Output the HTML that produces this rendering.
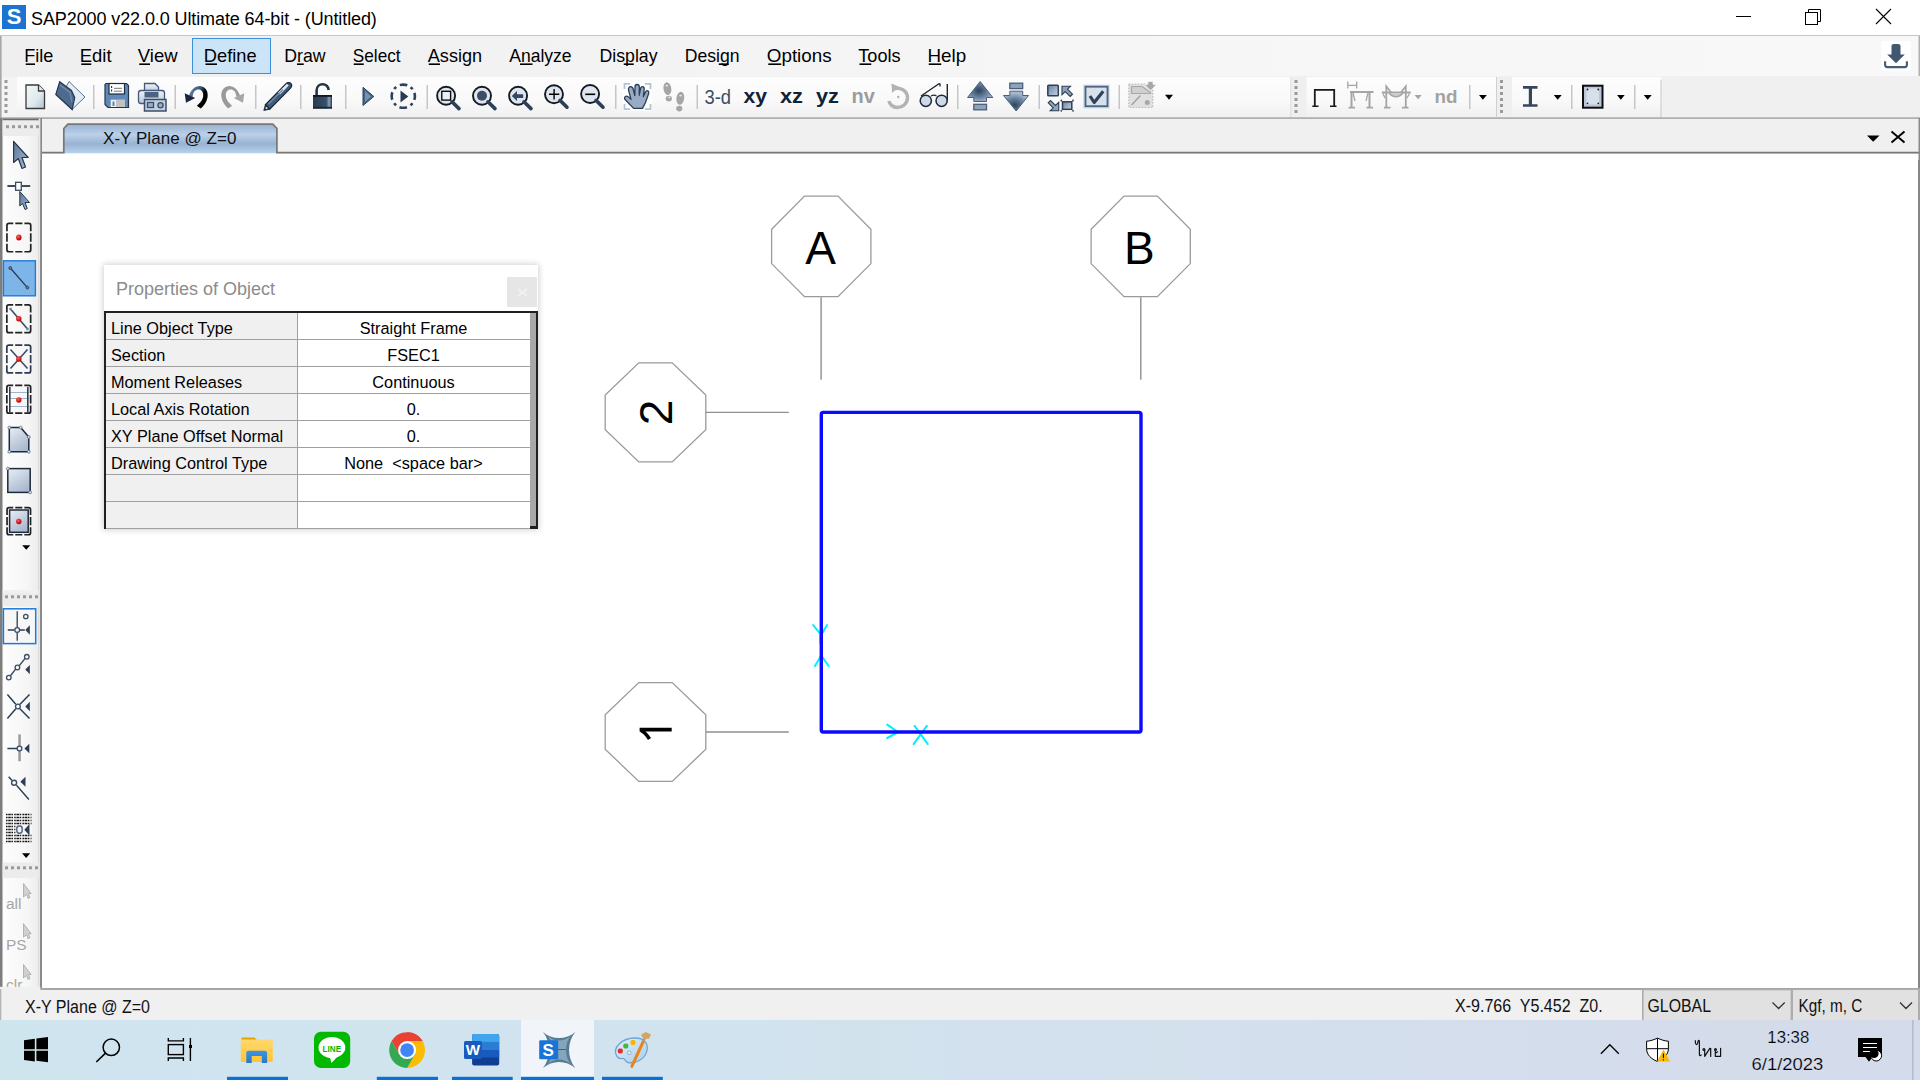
<!DOCTYPE html>
<html><head><meta charset="utf-8">
<style>
*{margin:0;padding:0;box-sizing:border-box}
html,body{width:1920px;height:1080px;overflow:hidden;background:#f0f0f0;font-family:"Liberation Sans",sans-serif;color:#000}
.a{position:absolute}
#title{left:0;top:0;width:1920px;height:36px;background:#fff}
#menubar{left:0;top:35px;width:1920px;height:41px;background:linear-gradient(90deg,#efefef,#f2f2f2 25%,#f6f6f6 55%,#f8f8f8);border-top:1px solid #c6c6c6}
#toolbar{left:2px;top:77px;width:1659px;height:40px;background:linear-gradient(#fdfdfd,#f9f9f9 60%,#f0f0f0)}
.sep{position:absolute;top:85px;width:1px;height:24px;background:#c4c4c4}
#tabstrip{left:41px;top:117px;width:1879px;height:37px;background:#f0f0f0}
#canvas{left:42px;top:154px;width:1877px;height:834px;background:#fff}
#leftbar{left:0;top:117px;width:41px;height:872px;background:#f0f0f0}
#status{left:0;top:988px;width:1920px;height:32px;background:#f0f0f0}
#taskbar{left:0;top:1020px;width:1920px;height:60px;background:linear-gradient(90deg,#cfe5ee,#d1e3ee 40%,#d4deec 75%,#d4dbea)}
</style></head><body>
<div class="a" id="title"></div>
<div class="a" id="menubar"></div>
<div class="a" id="toolbar"></div>
<div class="a" id="leftbar"></div>
<div class="a" id="tabstrip"></div>
<div class="a" id="canvas"></div>
<div class="a" id="status"></div>
<div class="a" id="taskbar"></div>

<!-- TITLE -->
<div class="a" style="left:2px;top:5px;width:24px;height:24px;background:#1e72d0;color:#fff;font-weight:bold;font-size:22px;line-height:24px;text-align:center">S</div>
<div class="a" style="left:31px;top:9px;font-size:18px;letter-spacing:-0.1px;white-space:nowrap;color:#000">SAP2000 v22.0.0 Ultimate 64-bit - (Untitled)</div>
<svg class="a" style="left:1720px;top:0" width="200" height="36">
<line x1="16" y1="16.5" x2="31" y2="16.5" stroke="#000" stroke-width="1"/>
<rect x="85.5" y="12.5" width="12" height="12" fill="none" stroke="#000" stroke-width="1"/>
<path d="M88.5 12.5V9.5H100.5V21.5H97.5" fill="none" stroke="#000" stroke-width="1"/>
<path d="M156 9L171 24M171 9L156 24" stroke="#000" stroke-width="1.1"/>
</svg>
<!-- MENU -->
<div class="a" style="left:192px;top:38px;width:79px;height:36px;background:#cce4f7;border:1px solid #3c8fd8"></div>
<svg class="a" id="menusvg" style="left:0;top:36px" width="1000" height="40" viewBox="0 36 1000 40"><g font-family="Liberation Sans" font-size="19" fill="#000">
<text x="24.3" y="61.8" textLength="29.1" lengthAdjust="spacingAndGlyphs">File</text>
<text x="79.8" y="61.8" textLength="31.8" lengthAdjust="spacingAndGlyphs">Edit</text>
<text x="137.8" y="61.8" textLength="39.8" lengthAdjust="spacingAndGlyphs">View</text>
<text x="203.8" y="61.8" textLength="52.8" lengthAdjust="spacingAndGlyphs">Define</text>
<text x="284.3" y="61.8" textLength="41.3" lengthAdjust="spacingAndGlyphs">Draw</text>
<text x="352.8" y="61.8" textLength="47.8" lengthAdjust="spacingAndGlyphs">Select</text>
<text x="427.8" y="61.8" textLength="54.3" lengthAdjust="spacingAndGlyphs">Assign</text>
<text x="509.3" y="61.8" textLength="62.3" lengthAdjust="spacingAndGlyphs">Analyze</text>
<text x="599.5" y="61.8" textLength="58.0" lengthAdjust="spacingAndGlyphs">Display</text>
<text x="684.8" y="61.8" textLength="54.8" lengthAdjust="spacingAndGlyphs">Design</text>
<text x="766.8" y="61.8" textLength="64.8" lengthAdjust="spacingAndGlyphs">Options</text>
<text x="858.3" y="61.8" textLength="42.3" lengthAdjust="spacingAndGlyphs">Tools</text>
<text x="927.5" y="61.8" textLength="38.7" lengthAdjust="spacingAndGlyphs">Help</text>
</g><g fill="#000"><rect x="25.75" y="63.4" width="9.25" height="1.6"/><rect x="81.25" y="63.4" width="10.00" height="1.6"/><rect x="139.25" y="63.4" width="10.75" height="1.6"/><rect x="205.5" y="63.4" width="11.50" height="1.6"/><rect x="297" y="63.4" width="6.75" height="1.6"/><rect x="353.75" y="63.4" width="10.00" height="1.6"/><rect x="428.75" y="63.4" width="11.25" height="1.6"/><rect x="520" y="63.4" width="12.50" height="1.6"/><rect x="623.75" y="63.4" width="10.00" height="1.6"/><rect x="718.75" y="63.4" width="10.00" height="1.6"/><rect x="768.25" y="63.4" width="13.00" height="1.6"/><rect x="859.5" y="63.4" width="11.75" height="1.6"/><rect x="928.75" y="63.4" width="12.50" height="1.6"/></g></svg>
<!-- TOOLBAR -->
<svg class="a" style="left:0;top:76px" width="1920" height="42" viewBox="0 76 1920 42">
<defs>
<linearGradient id="gDoc" x1="0" y1="0" x2="1" y2="1"><stop offset="0" stop-color="#f4f8f9"/><stop offset="0.6" stop-color="#dde9ec"/><stop offset="1" stop-color="#a9c6ce"/></linearGradient>
<linearGradient id="gBlue" x1="0" y1="0" x2="1" y2="1"><stop offset="0" stop-color="#3f5878"/><stop offset="0.5" stop-color="#6d8aac"/><stop offset="1" stop-color="#2e4360"/></linearGradient>
<linearGradient id="gLight" x1="0" y1="0" x2="0" y2="1"><stop offset="0" stop-color="#f2f5f9"/><stop offset="1" stop-color="#b7c6d8"/></linearGradient>
<linearGradient id="gSq" x1="0" y1="0" x2="1" y2="1"><stop offset="0" stop-color="#6480a4"/><stop offset="1" stop-color="#c9d6e4"/></linearGradient>
<radialGradient id="gArrUp" cx="0.45" cy="0.45" r="0.6"><stop offset="0" stop-color="#2d425c"/><stop offset="0.6" stop-color="#6c85a3"/><stop offset="1" stop-color="#a7b8cc"/></radialGradient>
<radialGradient id="gArrDn" cx="0.45" cy="0.7" r="0.6"><stop offset="0" stop-color="#2d425c"/><stop offset="0.6" stop-color="#6c85a3"/><stop offset="1" stop-color="#a7b8cc"/></radialGradient>
<linearGradient id="gLock" x1="0" y1="0" x2="1" y2="0"><stop offset="0" stop-color="#2a3b52"/><stop offset="0.7" stop-color="#3a4f6a"/><stop offset="0.85" stop-color="#8aa0bb"/><stop offset="1" stop-color="#2a3b52"/></linearGradient>
</defs>
<!-- grip -->
<rect x="2" y="77" width="15" height="40" fill="#f4f4f4"/>
<g fill="#9a9a9a"><rect x="4.5" y="80" width="3" height="3"/><rect x="4.5" y="86" width="3" height="3"/><rect x="4.5" y="92" width="3" height="3"/><rect x="4.5" y="98" width="3" height="3"/><rect x="4.5" y="104" width="3" height="3"/><rect x="4.5" y="110" width="3" height="3"/></g>
<!-- new doc -->
<path d="M26 85H38.5L44.5 91V108.5H26Z" fill="url(#gDoc)" stroke="#3a3a3a" stroke-width="1.3"/>
<path d="M38.5 85V91H44.5" fill="#e8eef0" stroke="#3a3a3a" stroke-width="1.3"/>
<!-- open folder -->
<path d="M69 81.5L85 97L72 109.5L60 98Z" fill="#e6ecf4" stroke="#5b7496" stroke-width="1"/>
<path d="M59.7 81.8L71.4 90.5L74.7 97.5L72.2 109.5L55.8 94.5Z" fill="#4e6a8e" stroke="#243650" stroke-width="1.2"/>
<path d="M60 85L70 92.5L72 102" fill="none" stroke="#6e8bb0" stroke-width="1.5"/>
<!-- separators -->
<g fill="#c6c6c6"><rect x="93" y="85" width="1.5" height="24"/><rect x="174.5" y="85" width="1.5" height="24"/><rect x="255" y="85" width="1.5" height="24"/><rect x="300" y="85" width="1.5" height="24"/><rect x="345" y="85" width="1.5" height="24"/><rect x="426.5" y="85" width="1.5" height="24"/><rect x="615" y="85" width="1.5" height="24"/><rect x="696.5" y="85" width="1.5" height="24"/><rect x="957" y="85" width="1.5" height="24"/><rect x="1038.5" y="85" width="1.5" height="24"/><rect x="1118.5" y="85" width="1.5" height="24"/><rect x="1469" y="85" width="1.5" height="24"/><rect x="1571" y="85" width="1.5" height="24"/><rect x="1634" y="85" width="1.5" height="24"/></g>
<!-- save -->
<path d="M106 83.5H126.5L128.5 85.5V107.5H108L105 104.5V84.5Z" fill="#5f89b8" stroke="#24354b" stroke-width="1.2"/>
<rect x="109" y="83.5" width="15.5" height="10.5" fill="#fff" stroke="#1e2a38" stroke-width="1.2"/>
<g stroke="#777" stroke-width="1"><line x1="114" y1="88.3" x2="122" y2="88.3"/><line x1="114" y1="91.2" x2="122" y2="91.2"/></g>
<g fill="#333"><rect x="111" y="86" width="1.2" height="2"/><rect x="111" y="89.5" width="1.2" height="2"/></g>
<rect x="110.5" y="99.5" width="14.5" height="7.5" fill="#c2c2c2"/>
<rect x="111" y="100" width="5" height="7" fill="#eef2f6"/>
<rect x="112.5" y="101.5" width="2" height="4.5" fill="#5a86b6"/>
<!-- print -->
<path d="M144.5 83.5H155L158.5 87V92H144.5Z" fill="url(#gLight)" stroke="#44597a" stroke-width="1.3"/>
<rect x="138.5" y="90.5" width="26" height="13" rx="2.5" fill="url(#gLight)" stroke="#44597a" stroke-width="1.3"/>
<rect x="144.5" y="92" width="14" height="5.5" fill="#4d6383"/>
<rect x="144.5" y="99.5" width="21.5" height="11.5" fill="#c3cfdf" stroke="#3b4f6c" stroke-width="1.5"/>
<rect x="147.5" y="102.5" width="6" height="5" fill="#9aaec6" stroke="#3b4f6c" stroke-width="1.3"/>
<circle cx="160.5" cy="105.2" r="2.6" fill="#9aaec6" stroke="#3b4f6c" stroke-width="1.3"/>
<!-- undo -->
<defs><linearGradient id="gUndo" x1="0" y1="0" x2="1" y2="0.6"><stop offset="0" stop-color="#6a8db5"/><stop offset="0.5" stop-color="#3b5675"/><stop offset="0.75" stop-color="#000"/></linearGradient></defs>
<path d="M189 96C190.5 90 195 86 200 86C206 86.5 208.5 92 207.5 97.5C206.5 102.5 204 105.5 200.8 108.5L196.8 105.8C200 103 203 99.5 203.2 96C203.5 91.5 200.8 89.6 198.3 89.6C195.5 89.6 193 92 192.5 97Z" fill="url(#gUndo)"/>
<path d="M184.7 93.3L186 102.8L195.2 97.9Z" fill="#15263a"/>
<!-- redo (gray) -->
<path d="M240 96C238.5 90 234 86 229 86C223 86.5 220.5 92 221.5 97.5C222.5 102.5 225 105.5 228.2 108.5L232.2 105.8C229 103 226 99.5 225.8 96C225.5 91.5 228.2 89.6 230.7 89.6C233.5 89.6 236 92 236.5 97Z" fill="#9a9a9a"/>
<path d="M244.3 93.3L243 102.8L233.8 97.9Z" fill="#a6a6a6"/>
<!-- pencil -->
<path d="M265.4 104.6L285.8 83.8C287.5 82.2 290 82.3 291 83.5C292 84.8 291.8 86.8 290.3 88.3L269.8 109.2Z" fill="#42597a" stroke="#17222f" stroke-width="1.1"/>
<path d="M279 93.5L287.8 84.7" stroke="#e2e9f1" stroke-width="2.6"/>
<path d="M268.5 104L283 89.5" stroke="#6f8bad" stroke-width="1.3"/>
<path d="M265.4 104.6L263.8 110.5L269.8 109.2Z" fill="#2a3a50" stroke="#17222f" stroke-width="0.8"/>
<circle cx="266.5" cy="108" r="1" fill="#dfe7ef"/>
<!-- lock -->
<path d="M316.6 95.5V90.5C316.6 82.5 328.5 82.2 328.6 90" fill="none" stroke="#24354a" stroke-width="2.6"/>
<rect x="313" y="95" width="19" height="13.6" fill="url(#gLock)"/>
<rect x="313" y="95" width="19" height="1.8" fill="#0e1620"/>
<rect x="313" y="106.8" width="19" height="1.8" fill="#1b2635"/>
<!-- play -->
<path d="M363 87.3V105.5L373.8 96.5Z" fill="#4a6588" stroke="#2c3f58" stroke-width="1"/>
<path d="M365 91V102L371 96.5Z" fill="#7690b0"/>
<!-- dashed circle play -->
<circle cx="403.3" cy="96.2" r="11.6" fill="none" stroke="#2f425b" stroke-width="2.6" stroke-dasharray="7.6 3.8 2.8 3.99" stroke-dashoffset="3.8"/>
<path d="M400.5 90.5V102.5L408.3 96.5Z" fill="#2a3b52"/>
<!-- zoom window -->
<circle cx="446.1" cy="95.7" r="9" fill="#dfe5ee" stroke="#141a22" stroke-width="1.9"/>
<rect x="441.8" y="91.3" width="8.8" height="8.8" fill="#eceff4" stroke="#101010" stroke-width="1.4"/>
<path d="M452 101.8L459 108.6" stroke="#2c3f58" stroke-width="3.6" stroke-linecap="round"/>
<!-- zoom full -->
<circle cx="482" cy="95.7" r="9" fill="#dfe5ee" stroke="#141a22" stroke-width="1.9"/>
<circle cx="482" cy="95.7" r="5" fill="#3a4e69"/>
<path d="M488 101.8L495 108.6" stroke="#2c3f58" stroke-width="3.6" stroke-linecap="round"/>
<!-- zoom prev -->
<circle cx="518.1" cy="95.7" r="9" fill="#dfe5ee" stroke="#141a22" stroke-width="1.9"/>
<path d="M511.8 96L517 91V94.2H523.2V98H517V101Z" fill="#34475f"/>
<path d="M524 101.8L531 108.6" stroke="#2c3f58" stroke-width="3.6" stroke-linecap="round"/>
<!-- zoom in -->
<circle cx="554" cy="94.3" r="9" fill="#dfe5ee" stroke="#141a22" stroke-width="1.9"/>
<path d="M549 94.3H559.3M554.1 89V99.5" stroke="#000" stroke-width="1.4"/>
<path d="M560 100.4L567 107.2" stroke="#2c3f58" stroke-width="3.6" stroke-linecap="round"/>
<!-- zoom out -->
<circle cx="590.1" cy="94" r="9" fill="#dfe5ee" stroke="#141a22" stroke-width="1.9"/>
<path d="M585.2 94.3H595.2" stroke="#000" stroke-width="1.6"/>
<path d="M596 100.4L603 107.2" stroke="#2c3f58" stroke-width="3.6" stroke-linecap="round"/>
<!-- pan hand -->
<rect x="623" y="82" width="29" height="29" fill="#fff"/>
<g fill="none" stroke="#b3c3d6" stroke-width="1.8"><path d="M624.5 89V83.8H630"/><path d="M645 83.8H650.5V89"/><path d="M624.5 104V109.2H630"/><path d="M645 109.2H650.5V104"/></g>
<path d="M633.6 108.4L625.3 99.8C623.8 98.3 624.6 96 626.8 96.2C628.3 96.4 629.8 98 631 99.3L628.6 90.3C628 88 629.3 86.6 630.8 86.7C632.2 86.8 633 88 633.4 89.8L634.8 95.6L635 87C635 85.2 636 84.5 637.1 84.5C638.4 84.5 639.3 85.4 639.3 87.2V95.2L640.5 88.6C640.8 87 641.8 86.4 642.8 86.6C644 86.9 644.4 88 644.2 89.5L643.3 96.5L645.5 92C646.2 90.7 647.4 90.4 648.2 91C649 91.6 649 92.7 648.5 94L645.5 102.5L642.5 108.4Z" fill="#98abc4" stroke="#2c3e56" stroke-width="1.3" stroke-linejoin="round"/>
<!-- footprints gray -->
<g fill="#a6a6a6"><ellipse cx="667.4" cy="88.6" rx="3.9" ry="6.5" transform="rotate(-8 667.4 88.6)"/><ellipse cx="668.8" cy="98.6" rx="3.1" ry="2.9"/><ellipse cx="680.3" cy="98.2" rx="3.9" ry="6.6" transform="rotate(8 680.3 98.2)"/><ellipse cx="679.3" cy="108.6" rx="3.1" ry="2.8"/></g>
<g fill="#ececec"><ellipse cx="666.8" cy="85.6" rx="1.3" ry="0.9"/><ellipse cx="669.2" cy="97.4" rx="1" ry="0.8"/><ellipse cx="680.6" cy="95.6" rx="1.3" ry="0.9"/></g>
<!-- 3-d xy xz yz nv -->
<text x="704.5" y="104" font-family="Liberation Sans" font-size="19.5" fill="#3a4e66" textLength="26.5" lengthAdjust="spacingAndGlyphs">3-d</text>
<g font-family="Liberation Sans" font-weight="bold" font-size="21" fill="#0f2236">
<text x="743.5" y="103" textLength="23.5" lengthAdjust="spacingAndGlyphs">xy</text>
<text x="780" y="103" textLength="23" lengthAdjust="spacingAndGlyphs">xz</text>
<text x="816" y="103" textLength="23" lengthAdjust="spacingAndGlyphs">yz</text>
<text x="851.5" y="103" textLength="23.2" lengthAdjust="spacingAndGlyphs" fill="#9c9c9c">nv</text>
</g>
<!-- rotate gray -->
<path d="M893 89.5C900 86 907.5 91 907.5 97.5C907.5 104 902 107.5 897.5 107.5C892.5 107.5 889.5 104 889 101" fill="none" stroke="#b3b3b3" stroke-width="3.4"/>
<path d="M891.5 83.5L898.5 86.5L892 93Z" fill="#b3b3b3"/>
<circle cx="898.3" cy="97" r="1.2" fill="#b3b3b3"/>
<!-- glasses -->
<path d="M921 96L939 83.7L940 84V86.5" fill="none" stroke="#1c2430" stroke-width="1.3"/>
<path d="M947.3 84V101" stroke="#1c2430" stroke-width="1.4"/>
<circle cx="925.8" cy="100.8" r="5.6" fill="#cfd9e6" stroke="#1c2a3c" stroke-width="1.5"/>
<circle cx="941.6" cy="100.8" r="5.6" fill="#cfd9e6" stroke="#1c2a3c" stroke-width="1.5"/>
<path d="M931 96C933 95 935 95 936.5 96" fill="none" stroke="#1c2a3c" stroke-width="1.3"/>
<!-- up arrow -->
<path d="M980.2 81.5L967.5 97.5H973.8V101.5H986.5V97.5H992.8Z" fill="url(#gArrUp)" stroke="#4a5f7a" stroke-width="1"/>
<rect x="973.8" y="104.3" width="12.7" height="5.5" fill="#8fa3bc" stroke="#4a5f7a" stroke-width="1.3"/>
<!-- down arrow -->
<rect x="1009.8" y="83.2" width="12.9" height="5.4" fill="#8fa3bc" stroke="#4a5f7a" stroke-width="1.3"/>
<path d="M1009.8 91.2H1022.7V95.5H1028.5L1016.2 111L1003.5 95.5H1009.8Z" fill="url(#gArrDn)" stroke="#4a5f7a" stroke-width="1"/>
<!-- shrink expand -->
<rect x="1047.8" y="85.3" width="10.5" height="10.5" rx="0.8" fill="url(#gSq)" stroke="#2f3f55" stroke-width="1.5"/>
<rect x="1062.5" y="101.8" width="9.3" height="7.5" fill="url(#gSq)" stroke="#2f3f55" stroke-width="1.5"/>
<g fill="#2f3f55"><circle cx="1061.3" cy="100.5" r="0.9"/><circle cx="1073" cy="100.5" r="0.9"/><circle cx="1061.3" cy="110.8" r="0.9"/><circle cx="1073" cy="110.8" r="0.9"/></g>
<path d="M1062 86.2H1070.5L1067.5 89.2L1072.5 94.2L1070.2 96.5L1065.2 91.5L1062 94.6Z" fill="#8ea3bd" stroke="#2f3f55" stroke-width="1.1"/>
<path d="M1058.7 110.8H1050.2L1053.2 107.8L1048.2 102.8L1050.5 100.5L1055.5 105.5L1058.7 102.4Z" fill="#8ea3bd" stroke="#2f3f55" stroke-width="1.1"/>
<!-- checkbox -->
<rect x="1083.3" y="84.7" width="26.3" height="23.7" fill="#c9d8ea"/>
<rect x="1085.5" y="86.7" width="22" height="19.5" fill="#d8e0ea" stroke="#4d6382" stroke-width="1.8"/>
<path d="M1090 96L1094.2 102.5L1103.2 91.3" fill="none" stroke="#2e425c" stroke-width="3.2" stroke-linejoin="round"/>
<!-- gray import icon -->
<rect x="1128.8" y="84" width="24" height="23.5" fill="#e0e0e0" stroke="#bcbcbc" stroke-width="1.2" stroke-dasharray="1.6 1.4"/>
<path d="M1131.5 86.5H1142L1150.5 92.5V93.5H1131.5Z" fill="#d0d0d0" stroke="#a8a8a8" stroke-width="1.2"/>
<path d="M1131.5 105L1140.5 95.5" stroke="#a4a4a4" stroke-width="1.6"/>
<circle cx="1147.3" cy="102.5" r="2.5" fill="#a7a7a7"/>
<path d="M1148 81.5H1153V84.5H1156.5L1150.5 90.5L1144.5 84.5H1148Z" fill="#a8a8a8" stroke="#fff" stroke-width="0.6"/>
<!-- dropdowns -->
<g fill="#000"><path d="M1165 94.8H1173L1169 99.8Z"/><path d="M1479 94.9H1486.8L1482.9 99.8Z"/><path d="M1553.8 94.9H1561.7L1557.7 99.8Z"/><path d="M1617 94.9H1624.7L1620.8 99.8Z"/><path d="M1643.8 94.9H1651.7L1647.7 99.8Z"/></g>
<!-- toolbar 2 edge/grip -->
<rect x="1290.5" y="77" width="1" height="40" fill="#cfcfcf"/>
<rect x="1291.5" y="77" width="15" height="40" fill="#efefef"/>
<g fill="#9a9a9a"><rect x="1294.5" y="80" width="3" height="3"/><rect x="1294.5" y="86" width="3" height="3"/><rect x="1294.5" y="92" width="3" height="3"/><rect x="1294.5" y="98" width="3" height="3"/><rect x="1294.5" y="104" width="3" height="3"/><rect x="1294.5" y="110" width="3" height="3"/></g>
<!-- frame icon -->
<path d="M1314.8 106V89.9H1334.2V106" fill="none" stroke="#1a1a1a" stroke-width="1.8"/>
<path d="M1312.3 106.3H1318.5M1330 106.3H1336.5" stroke="#1a1a1a" stroke-width="1.6"/>
<!-- gray frame 2 -->
<g stroke="#a5a5a5" fill="none"><path d="M1347.8 81.5V88.5M1356.7 81.5V88.5M1347.8 85.3H1356.7" stroke-width="1.3"/>
<path d="M1351.5 107V92M1350 92H1373.5M1369.5 92V107" stroke-width="2"/>
<path d="M1353 93L1355 101M1368 93L1366 101" stroke-width="1.3"/>
<path d="M1348.5 107.6H1355M1366.5 107.6H1373" stroke-width="1.8"/></g>
<!-- gray frame 3 -->
<g stroke="#a5a5a5" fill="none"><path d="M1386.3 107V86.3L1391.5 93M1405.8 107V86.3L1400.5 93" stroke-width="1.8"/>
<path d="M1381.8 92.5H1410.8" stroke-width="2"/>
<path d="M1389 93C1393 98 1399 98 1403 93" stroke-width="1.5" fill="#cdcdcd"/>
<path d="M1383 93.5L1385 98M1409.5 93.5L1407 98" stroke-width="1.3"/>
<path d="M1384 107.6H1390.5M1402 107.6H1408.5" stroke-width="1.8"/></g>
<path d="M1414.5 95H1421.7L1418.1 99.3Z" fill="#a5a5a5"/>
<text x="1434.5" y="103" font-family="Liberation Sans" font-weight="bold" font-size="19" fill="#a2a2a2" textLength="23" lengthAdjust="spacingAndGlyphs">nd</text>
<!-- toolbar 3 edge/grip -->
<rect x="1496" y="77" width="1" height="40" fill="#cfcfcf"/>
<rect x="1497" y="77" width="15" height="40" fill="#efefef"/>
<g fill="#9a9a9a"><rect x="1500" y="80" width="3" height="3"/><rect x="1500" y="86" width="3" height="3"/><rect x="1500" y="92" width="3" height="3"/><rect x="1500" y="98" width="3" height="3"/><rect x="1500" y="104" width="3" height="3"/><rect x="1500" y="110" width="3" height="3"/></g>
<!-- I beam -->
<path d="M1523 86H1537.5V88.8H1532V104.2H1537.5V106.8H1523V104.2H1528.8V88.8H1523Z" fill="#36475b"/>
<!-- rect icon -->
<rect x="1583" y="85.7" width="19.5" height="22" fill="#b9c7d9" stroke="#0e0e0e" stroke-width="2"/>
<rect x="1586.5" y="88.5" width="12.5" height="16" fill="#d7dfe9"/>
<g fill="#222"><circle cx="1587.5" cy="89.5" r="0.9"/><circle cx="1598.3" cy="89.5" r="0.9"/><circle cx="1587.5" cy="103.3" r="0.9"/><circle cx="1598.3" cy="103.3" r="0.9"/></g>
<!-- toolbar 3 right edge -->
<rect x="1660.5" y="80" width="1" height="37" fill="#c8c8c8"/>
</svg>
<!-- download icon -->
<svg class="a" style="left:1876px;top:36px" width="44" height="40">
<rect x="5.3" y="5.2" width="29.4" height="29.6" fill="#fff"/>
<path d="M15.5 10.2C15.5 8.8 16.5 8 17.8 8H22.2C23.5 8 24.5 8.8 24.5 10.2V18.5H28.8L20 27.2L11.2 18.5H15.5Z" fill="#435670"/>
<path d="M9.1 25.3V28.8C9.1 30.4 10 31.1 11.5 31.1H28.6C30.1 31.1 30.9 30.4 30.9 28.8V25.3" fill="none" stroke="#4a5c75" stroke-width="2.1"/>
<rect x="42.5" y="0" width="1.5" height="40" fill="#b0b0b0"/>
</svg>

<!-- TABSTRIP + frame lines -->
<svg class="a" style="left:0;top:112px" width="1920" height="50" viewBox="0 112 1920 50">
<defs><linearGradient id="gTab" x1="0" y1="0" x2="0" y2="1">
<stop offset="0" stop-color="#97b2d2"/><stop offset="0.36" stop-color="#bbd0ea"/><stop offset="0.68" stop-color="#98b3d3"/><stop offset="1" stop-color="#b5d1ec"/></linearGradient></defs>
<rect x="0" y="117.3" width="1920" height="1.6" fill="#a9a9a9"/>
<path d="M63.5 153V128.5L67.5 124.3H272.7L276.8 128.5V153Z" fill="url(#gTab)"/>
<path d="M41 152.7H63.8V128.5L67.8 124.2H272.7L276.9 128.4V152.7H1919" fill="none" stroke="#777" stroke-width="1.7"/>
<rect x="40.3" y="118" width="1.7" height="44" fill="#8a8a8a"/>
<rect x="1918.5" y="118" width="1.5" height="44" fill="#8a8a8a"/>
<path d="M1867 135.5H1879.5L1873.2 141.8Z" fill="#000"/>
<path d="M1891.5 131.5L1904.5 142.5M1904.5 131.5L1891.5 142.5" stroke="#000" stroke-width="1.9"/>
</svg>
<div class="a" style="left:103px;top:129px;font-size:17px;letter-spacing:0.05px;color:#111;white-space:nowrap">X-Y Plane @ Z=0</div>
<!-- canvas borders -->
<div class="a" style="left:40.3px;top:160px;width:1.7px;height:830px;background:#8a8a8a"></div>
<div class="a" style="left:1918.3px;top:160px;width:1.7px;height:860px;background:#868686"></div>
<div class="a" style="left:40px;top:987.8px;width:1880px;height:2.4px;background:#a6a6a6"></div>

<!-- LEFT TOOLBAR -->
<svg class="a" style="left:0;top:36px" width="42" height="954" viewBox="0 36 42 954">
<defs>
<linearGradient id="gLb" x1="0" y1="0" x2="1" y2="0"><stop offset="0" stop-color="#fdfdfd"/><stop offset="0.7" stop-color="#f6f6f6"/><stop offset="1" stop-color="#ececec"/></linearGradient>
<linearGradient id="gPtr" x1="0" y1="0" x2="1" y2="1"><stop offset="0" stop-color="#5a7598"/><stop offset="1" stop-color="#a9bbd1"/></linearGradient>
<linearGradient id="gFace" x1="0" y1="0" x2="0.6" y2="1"><stop offset="0" stop-color="#e9eef5"/><stop offset="1" stop-color="#a9b9cf"/></linearGradient>
<radialGradient id="gRed" cx="0.4" cy="0.35" r="0.6"><stop offset="0" stop-color="#ff6060"/><stop offset="1" stop-color="#c00000"/></radialGradient>
</defs>
<rect x="0" y="36" width="1.6" height="82" fill="#a8a8a8"/>
<rect x="0" y="118" width="2.7" height="869" fill="#7e7e7e"/>
<rect x="2.7" y="118" width="36" height="869" fill="url(#gLb)"/>
<rect x="38.3" y="120" width="1" height="867" fill="#d4d4d4"/>
<rect x="2.7" y="118.3" width="36" height="2" fill="#6c6c6c"/>
<rect x="2.7" y="121" width="36" height="15" fill="#ececec"/>
<g fill="#9a9a9a"><rect x="6" y="125.2" width="3" height="3"/><rect x="12" y="125.2" width="3" height="3"/><rect x="18" y="125.2" width="3" height="3"/><rect x="24" y="125.2" width="3" height="3"/><rect x="30" y="125.2" width="3" height="3"/><rect x="36" y="125.2" width="3" height="3"/></g>
<!-- 1 pointer -->
<path d="M13.6 141.3V162.5L18.3 158.5L22 168.5L25.5 167L22 157.5H28.2Z" fill="url(#gPtr)" stroke="#24364c" stroke-width="1.2" stroke-linejoin="round"/>
<!-- 2 joint pointer -->
<path d="M7.4 186.1H15.4M21.5 186.1H30.2" stroke="#3b4b60" stroke-width="2"/>
<rect x="15.6" y="182.3" width="5.7" height="8" fill="#fff" stroke="#3b4b60" stroke-width="1.3"/>
<path d="M19.8 191.5V206L22.5 203.5L25 209.5L27.3 208.5L25 202.5H29.5Z" fill="url(#gPtr)" stroke="#24364c" stroke-width="1" stroke-linejoin="round"/>
<!-- 3 dashed box dot -->
<path d="M6.94 231.35V225.45Q6.94 223.45 8.95 223.45H13.28M24.42 223.45H28.75Q30.75 223.45 30.75 225.45V231.35M30.75 243.84V249.75Q30.75 251.75 28.75 251.75H24.42M13.28 251.75H8.95Q6.94 251.75 6.94 249.75V243.84M15.28 223.45H22.41M15.28 251.75H22.41M6.94 233.35V241.84M30.75 233.35V241.84" fill="none" stroke="#222" stroke-width="1.7"/>
<ellipse cx="18.85" cy="237.4" rx="2.7" ry="3" fill="url(#gRed)"/>
<!-- 4 selected line -->
<rect x="3.4" y="260.8" width="32" height="35" fill="#7eb5e8" stroke="#1f7ad8" stroke-width="1.4"/>
<path d="M10.3 268L27.4 287.6" stroke="#2c3a4c" stroke-width="1.3"/>
<circle cx="10.3" cy="268" r="1.5" fill="#5e7492" stroke="#2c3a4c" stroke-width="0.7"/><circle cx="27.4" cy="287.6" r="1.5" fill="#5e7492" stroke="#2c3a4c" stroke-width="0.7"/>
<!-- 5 dashed line w dot -->
<path d="M6.85 312.58V306.85Q6.85 304.85 8.85 304.85H13.17M24.32 304.85H28.65Q30.65 304.85 30.65 306.85V312.58M30.65 324.92V330.65Q30.65 332.65 28.65 332.65H24.32M13.17 332.65H8.85Q6.85 332.65 6.85 330.65V324.92M15.17 304.85H22.31M15.17 332.65H22.31M6.85 314.58V322.91M30.65 314.58V322.91" fill="none" stroke="#222" stroke-width="1.7"/>
<path d="M10.5 309L27.5 329" stroke="#3b4d66" stroke-width="1.6"/>
<rect x="9.3" y="307.8" width="2.4" height="2.4" fill="#7089aa"/><rect x="26.3" y="327.8" width="2.4" height="2.4" fill="#7089aa"/>
<circle cx="18.8" cy="318.7" r="2.7" fill="url(#gRed)"/>
<!-- 6 X -->
<path d="M6.85 352.88V347.15Q6.85 345.15 8.85 345.15H13.17M24.32 345.15H28.65Q30.65 345.15 30.65 347.15V352.88M30.65 365.22V370.95Q30.65 372.95 28.65 372.95H24.32M13.17 372.95H8.85Q6.85 372.95 6.85 370.95V365.22M15.17 345.15H22.31M15.17 372.95H22.31M6.85 354.88V363.21M30.65 354.88V363.21" fill="none" stroke="#2e3c50" stroke-width="1.7"/>
<path d="M10.5 349.5L27.5 368.5M27.5 349.5L10.5 368.5" stroke="#3b4d66" stroke-width="1.6"/>
<circle cx="18.8" cy="359" r="2.7" fill="url(#gRed)"/>
<!-- 7 -->
<path d="M6.85 393.08V387.35Q6.85 385.35 8.85 385.35H13.17M24.32 385.35H28.65Q30.65 385.35 30.65 387.35V393.08M30.65 405.42V411.15Q30.65 413.15 28.65 413.15H24.32M13.17 413.15H8.85Q6.85 413.15 6.85 411.15V405.42M15.17 385.35H22.31M15.17 413.15H22.31M6.85 395.08V403.41M30.65 395.08V403.41" fill="none" stroke="#222" stroke-width="1.7"/>
<path d="M9 392.5H29M9 398.5H29M9 406.5H29" stroke="#9fb4cc" stroke-width="1.2"/>
<path d="M9.8 387V412.5M27.8 387V412.5" stroke="#2e3c50" stroke-width="1.6"/>
<circle cx="18.8" cy="400" r="2.7" fill="url(#gRed)"/>
<!-- 8 polygon -->
<path d="M9.3 427.6H20.7L28.8 437V451.8H9.3Z" fill="url(#gFace)" stroke="#1e2a3a" stroke-width="1.5"/>
<g fill="#dde6f0" stroke="#56708f" stroke-width="0.8"><circle cx="9.3" cy="427.6" r="1.4"/><circle cx="20.7" cy="427.6" r="1.4"/><circle cx="28.8" cy="437" r="1.4"/><circle cx="9.3" cy="451.8" r="1.4"/><circle cx="28.8" cy="451.8" r="1.4"/></g>
<!-- 9 square -->
<rect x="7.8" y="468.6" width="22.4" height="23.8" fill="url(#gFace)" stroke="#1e2a3a" stroke-width="1.5"/>
<g fill="#dde6f0" stroke="#56708f" stroke-width="0.8"><circle cx="7.8" cy="468.6" r="1.4"/><circle cx="30.2" cy="492.4" r="1.4"/></g>
<!-- 10 dashed w face -->
<path d="M7.05 515.07V509.55Q7.05 507.55 9.05 507.55H13.27M24.32 507.55H28.54Q30.54 507.55 30.54 509.55V515.07M30.54 527.23V532.75Q30.54 534.75 28.54 534.75H24.32M13.27 534.75H9.05Q7.05 534.75 7.05 532.75V527.23M15.27 507.55H22.32M15.27 534.75H22.32M7.05 517.07V525.23M30.54 517.07V525.23" fill="none" stroke="#222" stroke-width="1.7"/>
<rect x="9.6" y="510" width="18.6" height="22.3" fill="url(#gFace)" stroke="#1e2a3a" stroke-width="1.5"/>
<circle cx="18.8" cy="521.5" r="2.7" fill="url(#gRed)"/>
<path d="M22.2 545.3H30.3L26.25 549.8Z" fill="#000"/>
<!-- group 2 grip -->
<rect x="2.7" y="590" width="36" height="3" fill="#f0f0f0"/>
<rect x="2.7" y="593" width="36" height="13.5" fill="#ececec"/>
<g fill="#9a9a9a"><rect x="5" y="595.3" width="3" height="3"/><rect x="11" y="595.3" width="3" height="3"/><rect x="17" y="595.3" width="3" height="3"/><rect x="23" y="595.3" width="3" height="3"/><rect x="29" y="595.3" width="3" height="3"/><rect x="35" y="595.3" width="3" height="3"/></g>
<!-- s1 -->
<rect x="3.4" y="608.8" width="32.3" height="34.8" fill="#f7f7f7" stroke="#1f7ad8" stroke-width="1.5"/>
<path d="M17.2 611.2V627.5M17.2 632.5V640.7M7.8 630H14.7M19.7 630H24.8" stroke="#2c3e56" stroke-width="1.3"/>
<circle cx="17.2" cy="630" r="2.4" fill="none" stroke="#3a4e68" stroke-width="1.3"/>
<circle cx="25.8" cy="616.5" r="2.2" fill="none" stroke="#3a4e68" stroke-width="1.3"/>
<path d="M29.8 625.3V634.7L25.3 630Z" fill="#2c3e56"/>
<!-- s2 -->
<path d="M10.3 676L15.7 669M19 666L25 658.5" stroke="#3a4e68" stroke-width="1.3"/>
<g fill="none" stroke="#3a4e68" stroke-width="1.3"><circle cx="8.8" cy="677.6" r="2.3"/><circle cx="17.4" cy="667.5" r="2.3"/><circle cx="26.8" cy="656.8" r="2.3"/></g>
<path d="M29.8 664.9V674.3L25.3 669.6Z" fill="#2c3e56"/>
<!-- s3 -->
<path d="M7.4 694.4L15.8 704.3M19.9 708.8L29.5 718.6M29.5 694.4L20 704.3M15.8 708.8L7.4 718.6" stroke="#2c3e56" stroke-width="1.5"/>
<circle cx="17.9" cy="706.5" r="2.4" fill="none" stroke="#3a4e68" stroke-width="1.3"/>
<path d="M29.8 701.8V711.2L25.3 706.5Z" fill="#2c3e56"/>
<!-- s4 -->
<rect x="18.3" y="734.4" width="2.5" height="26.8" fill="#9a9a9a"/>
<path d="M7.4 748.5H17" stroke="#2c3e56" stroke-width="1.5"/>
<circle cx="19.5" cy="748.5" r="2.4" fill="#f4f4f4" stroke="#3a4e68" stroke-width="1.3"/>
<path d="M29.3 743.8V753.2L24.4 748.5Z" fill="#2c3e56"/>
<!-- s5 -->
<path d="M8.7 776.7L11.8 780.3M16.5 785.3L28.9 799.5" stroke="#2c3e56" stroke-width="1.4"/>
<circle cx="14.1" cy="782.7" r="2.5" fill="none" stroke="#3a4e68" stroke-width="1.4"/>
<path d="M25.5 776.7V786.7L20.3 781.7Z" fill="#2c3e56"/>
<!-- s6 grid -->
<g stroke="#1a1a1a" stroke-width="1.4" stroke-dasharray="1.6 0.6 2.6 0.6 1.6 1.2"><path d="M6 814.5H31.5M6 817.5H31.5M6 820.5H31.5M6 823.5H31.5M6 826.5H31.5M6 829.5H31.5M6 832.5H31.5M6 835.5H31.5M6 838.5H31.5M6 841.5H31.5"/></g>
<rect x="15.5" y="825" width="16.5" height="9" fill="#f7f7f7"/>
<rect x="16.8" y="826" width="5.4" height="7.2" rx="2.4" fill="#f4f4f4" stroke="#4a6284" stroke-width="1.4"/>
<path d="M29.5 824V835.5L24.3 829.7Z" fill="#2c3e56"/>
<path d="M22.1 853.2H30.2L26.15 857.9Z" fill="#000"/>
<!-- group 3 grip -->
<rect x="2.7" y="862.6" width="36" height="15.4" fill="#ececec"/>
<g fill="#9a9a9a"><rect x="5" y="866.3" width="3" height="3"/><rect x="11" y="866.3" width="3" height="3"/><rect x="17" y="866.3" width="3" height="3"/><rect x="23" y="866.3" width="3" height="3"/><rect x="29" y="866.3" width="3" height="3"/><rect x="35" y="866.3" width="3" height="3"/></g>
<g fill="#a6a6a6" font-family="Liberation Sans" font-size="15.5">
<text x="6" y="909.3">all</text><text x="6" y="949.5">PS</text><text x="6" y="989.5">clr</text></g>
<g fill="#d0d0d0" stroke="#a8a8a8" stroke-width="0.8"><path d="M23.5 883.5V897L26.5 894.5L28 898.5L30 897.5L28.5 893.5H31.2Z"/><path d="M23.5 923.7V937.2L26.5 934.7L28 938.7L30 937.7L28.5 933.7H31.2Z"/><path d="M23.5 964.5V978L26.5 975.5L28 979.5L30 978.5L28.5 974.5H31.2Z"/></g>
<rect x="0" y="986.8" width="40.3" height="3.2" fill="#f0f0f0"/>
</svg>

<!-- CANVAS DRAWING -->
<svg class="a" style="left:0;top:0" width="1920" height="990" viewBox="0 0 1920 990">
<g fill="#fff" stroke="#9a9a9a" stroke-width="1.3">
<path d="M804.5 196.1L838.0 196.1L870.9 229.2L870.9 263.6L838.0 296.7L804.5 296.7L771.6 263.6L771.6 229.2Z"/>
<path d="M1124.0 196.1L1157.4 196.1L1190.3 229.2L1190.3 263.6L1157.4 296.7L1124.0 296.7L1091.1 263.6L1091.1 229.2Z"/>
<path d="M638.8 362.8L672.2 362.8L705.8 395.1L705.8 429.6L672.2 461.9L638.8 461.9L605.2 429.6L605.2 395.1Z"/>
<path d="M638.8 682.6L672.2 682.6L705.8 714.8L705.8 749.2L672.2 781.4L638.8 781.4L605.2 749.2L605.2 714.8Z"/>
</g>
<g stroke="#8f8f8f" stroke-width="1.4">
<path d="M821.1 297.2V379.8"/>
<path d="M1140.8 297.2V379.8"/>
<path d="M706 412.4H788.8"/>
<path d="M706 732H788.8"/>
</g>
<g font-family="Liberation Sans" font-size="46" fill="#000">
<text x="820.5" y="264.4" text-anchor="middle">A</text>
<text x="1139.4" y="264.4" text-anchor="middle">B</text>
<text transform="translate(672,412.4) rotate(-90)" text-anchor="middle">2</text>

</g>
<path d="M639.6 729.6H671.7M641 730.5C644 732 647 735 649.5 739" stroke="#000" stroke-width="3.6" fill="none"/>
<g stroke="#00f0ff" stroke-width="2" fill="none" stroke-linecap="round">
<path d="M813.1 625.1L821.3 634.8M827.1 625.1L821.3 634.8"/>
<path d="M814.9 666L821.3 655.5M828.6 666L821.3 655.5"/>
<path d="M887.2 724.6L898 732.1M887.2 738L898 732.1"/>
<path d="M914.6 725.8L927.8 744.1M926.8 725.8L913.6 744.1"/>
</g>
<path d="M820.6 635V643.5" stroke="#1a7dff" stroke-width="2"/>
<rect x="821.3" y="412.4" width="319.7" height="319.6" rx="2" fill="none" stroke="#0a0aff" stroke-width="3.4"/>
</svg>

<!-- PROPERTIES DIALOG -->
<div class="a" style="left:104px;top:265px;width:434px;height:264px;background:#fff;box-shadow:0 0 6px 1px rgba(0,0,0,0.18)"></div>
<div class="a" style="left:116px;top:279px;font-size:18px;color:#8c8c8c;white-space:nowrap">Properties of Object</div>
<div class="a" style="left:507px;top:277px;width:30px;height:30px;background:#e6e6e6"></div>
<svg class="a" style="left:507px;top:277px" width="30" height="30"><path d="M11.3 12.3L19.7 18.7M19.7 12.3L11.3 18.7" stroke="#f1f1f1" stroke-width="1.9"/></svg>
<div class="a" style="left:104px;top:311px;width:434px;height:218px;background:#202020"></div>
<div class="a" style="left:106px;top:313px;width:191px;height:27px;background:#f0f0f0;border-bottom:1px solid #a0a0a0"></div>
<div class="a" style="left:297px;top:313px;width:233px;height:27px;background:#fff;border-bottom:1px solid #a0a0a0;border-left:1px solid #a0a0a0"></div>
<div class="a" style="left:111px;top:319px;font-size:16.3px;white-space:pre;color:#000">Line Object Type</div>
<div class="a" style="left:297px;top:319px;width:233px;text-align:center;font-size:16.3px;white-space:pre;color:#000">Straight Frame</div>
<div class="a" style="left:106px;top:340px;width:191px;height:27px;background:#f0f0f0;border-bottom:1px solid #a0a0a0"></div>
<div class="a" style="left:297px;top:340px;width:233px;height:27px;background:#fff;border-bottom:1px solid #a0a0a0;border-left:1px solid #a0a0a0"></div>
<div class="a" style="left:111px;top:346px;font-size:16.3px;white-space:pre;color:#000">Section</div>
<div class="a" style="left:297px;top:346px;width:233px;text-align:center;font-size:16.3px;white-space:pre;color:#000">FSEC1</div>
<div class="a" style="left:106px;top:367px;width:191px;height:27px;background:#f0f0f0;border-bottom:1px solid #a0a0a0"></div>
<div class="a" style="left:297px;top:367px;width:233px;height:27px;background:#fff;border-bottom:1px solid #a0a0a0;border-left:1px solid #a0a0a0"></div>
<div class="a" style="left:111px;top:373px;font-size:16.3px;white-space:pre;color:#000">Moment Releases</div>
<div class="a" style="left:297px;top:373px;width:233px;text-align:center;font-size:16.3px;white-space:pre;color:#000">Continuous</div>
<div class="a" style="left:106px;top:394px;width:191px;height:27px;background:#f0f0f0;border-bottom:1px solid #a0a0a0"></div>
<div class="a" style="left:297px;top:394px;width:233px;height:27px;background:#fff;border-bottom:1px solid #a0a0a0;border-left:1px solid #a0a0a0"></div>
<div class="a" style="left:111px;top:400px;font-size:16.3px;white-space:pre;color:#000">Local Axis Rotation</div>
<div class="a" style="left:297px;top:400px;width:233px;text-align:center;font-size:16.3px;white-space:pre;color:#000">0.</div>
<div class="a" style="left:106px;top:421px;width:191px;height:27px;background:#f0f0f0;border-bottom:1px solid #a0a0a0"></div>
<div class="a" style="left:297px;top:421px;width:233px;height:27px;background:#fff;border-bottom:1px solid #a0a0a0;border-left:1px solid #a0a0a0"></div>
<div class="a" style="left:111px;top:427px;font-size:16.3px;white-space:pre;color:#000">XY Plane Offset Normal</div>
<div class="a" style="left:297px;top:427px;width:233px;text-align:center;font-size:16.3px;white-space:pre;color:#000">0.</div>
<div class="a" style="left:106px;top:448px;width:191px;height:27px;background:#f0f0f0;border-bottom:1px solid #a0a0a0"></div>
<div class="a" style="left:297px;top:448px;width:233px;height:27px;background:#fff;border-bottom:1px solid #a0a0a0;border-left:1px solid #a0a0a0"></div>
<div class="a" style="left:111px;top:454px;font-size:16.3px;white-space:pre;color:#000">Drawing Control Type</div>
<div class="a" style="left:297px;top:454px;width:233px;text-align:center;font-size:16.3px;white-space:pre;color:#000">None  &lt;space bar&gt;</div>
<div class="a" style="left:106px;top:475px;width:191px;height:27px;background:#f0f0f0;border-bottom:1px solid #a0a0a0"></div>
<div class="a" style="left:297px;top:475px;width:233px;height:27px;background:#fff;border-bottom:1px solid #a0a0a0;border-left:1px solid #a0a0a0"></div>
<div class="a" style="left:106px;top:502px;width:191px;height:27px;background:#f0f0f0;border-bottom:1px solid #a0a0a0"></div>
<div class="a" style="left:297px;top:502px;width:233px;height:27px;background:#fff;border-bottom:1px solid #a0a0a0;border-left:1px solid #a0a0a0"></div>

<div class="a" style="left:530.3px;top:313px;width:5.6px;height:213px;background:#a8a8a8"></div>

<!-- STATUS BAR -->
<svg class="a" style="left:0;top:988px" width="1920" height="32" viewBox="0 988 1920 32">
<rect x="0" y="989" width="1.3" height="31" fill="#b4b4b4"/>
<g font-family="Liberation Sans" font-size="17.5" fill="#111">
<text x="25" y="1013.1" textLength="125" lengthAdjust="spacingAndGlyphs">X-Y Plane @ Z=0</text>
<text x="1455" y="1011.9" textLength="147.7" lengthAdjust="spacingAndGlyphs" xml:space="preserve">X-9.766  Y5.452  Z0.</text>
</g>
<rect x="1642" y="989" width="150" height="31" fill="#e1e1e1"/>
<rect x="1642" y="989" width="1.6" height="31" fill="#adadad"/>
<rect x="1642" y="989" width="278" height="1.3" fill="#adadad"/>
<rect x="1790.6" y="989" width="2.4" height="31" fill="#adadad"/>
<rect x="1793" y="990.3" width="125" height="29.7" fill="#e1e1e1"/>
<rect x="1918" y="989" width="2" height="31" fill="#adadad"/>
<g font-family="Liberation Sans" font-size="17.5" fill="#111">
<text x="1647.5" y="1011.7" textLength="63.5" lengthAdjust="spacingAndGlyphs">GLOBAL</text>
<text x="1798.5" y="1011.7" textLength="63.7" lengthAdjust="spacingAndGlyphs">Kgf, m, C</text>
</g>
<path d="M1772.5 1002.5L1778.6 1008.5L1784.7 1002.5M1900 1002.5L1906 1008.5L1912 1002.5" fill="none" stroke="#333" stroke-width="1.3"/>
</svg>
<!-- TASKBAR -->
<svg class="a" style="left:0;top:1020px" width="1920" height="60" viewBox="0 1020 1920 60">
<defs>
<linearGradient id="gFold" x1="0" y1="0" x2="0" y2="1"><stop offset="0" stop-color="#ffd86e"/><stop offset="1" stop-color="#ffc531"/></linearGradient>
<linearGradient id="gShelf" x1="0" y1="0" x2="0" y2="1"><stop offset="0" stop-color="#3b95e6"/><stop offset="1" stop-color="#2a78c8"/></linearGradient>
</defs>
<rect x="521" y="1020" width="73" height="57" fill="#f1f5f9"/>
<!-- underline bars -->
<g fill="#0b6fd6"><rect x="227" y="1076.8" width="61" height="3.2"/><rect x="376.8" y="1076.8" width="61.2" height="3.2"/><rect x="452" y="1076.8" width="60.7" height="3.2"/><rect x="521" y="1076.8" width="73" height="3.2"/><rect x="602" y="1076.8" width="60.8" height="3.2"/></g>
<!-- windows logo -->
<path d="M24 1040.2L34.8 1038.7V1049.3H24Z M36.4 1038.5L48 1036.9V1049.3H36.4Z M24 1050.8H34.8V1061.4L24 1059.9Z M36.4 1050.8H48V1062.3L36.4 1060.7Z" fill="#000"/>
<!-- search -->
<circle cx="111.3" cy="1047.3" r="8.2" fill="none" stroke="#000" stroke-width="1.5"/>
<path d="M105.5 1053.2L96.3 1062" stroke="#000" stroke-width="1.6"/>
<!-- task view -->
<g fill="none" stroke="#000" stroke-width="1.4"><path d="M168.3 1038V1040.9H183.4V1038"/><rect x="168.3" y="1044.6" width="15.1" height="10"/><path d="M168.3 1061V1058H183.4V1061"/><path d="M190.4 1038V1061"/></g>
<rect x="189" y="1045" width="3" height="3" fill="#000"/>
<!-- explorer -->
<path d="M241.5 1037.5H254.5L256.5 1039.5V1042H241.5Z" fill="#e3a200"/>
<rect x="240.8" y="1039.5" width="32" height="22.4" rx="1.2" fill="url(#gFold)"/>
<path d="M246.3 1063V1053C246.3 1051.5 247.2 1050.7 248.7 1050.7H264.7C266.2 1050.7 267.1 1051.5 267.1 1053V1063H261.8V1056.1H251.7V1063Z" fill="url(#gShelf)"/>
<!-- LINE -->
<rect x="314" y="1031.8" width="36.2" height="36.2" rx="7" fill="#00b900"/>
<ellipse cx="331.9" cy="1047.6" rx="13.4" ry="10.6" fill="#fff"/>
<path d="M329.5 1056L331.5 1063L338 1056Z" fill="#fff"/>
<text x="322.6" y="1052" font-family="Liberation Sans" font-weight="bold" font-size="9.5" fill="#00b900" textLength="18.5" lengthAdjust="spacingAndGlyphs">LINE</text>
<!-- chrome -->
<g transform="translate(407.1 1050.05)">
<path d="M0 -17.9A17.9 17.9 0 0 1 15.5 -8.95L0 -8.95Z" fill="#e94235"/>
<path d="M-15.5 -8.95A17.9 17.9 0 0 1 15.5 -8.95H0L-7.75 4.47Z" fill="#e94235"/>
<path d="M15.5 -8.95A17.9 17.9 0 0 1 0 17.9L7.75 4.47L0 -8.95Z" fill="#fbbc04"/>
<path d="M0 17.9A17.9 17.9 0 0 1 -15.5 -8.95L-7.75 4.47L7.75 4.47Z" fill="#34a853"/>
<path d="M0 -8.95H15.5A17.9 17.9 0 0 1 16 1Z" fill="#fbbc04"/>
<circle r="9" fill="#fff"/><circle r="6.9" fill="#4285f4"/>
</g>
<!-- word -->
<rect x="472.1" y="1034.1" width="27.1" height="31.5" rx="2" fill="#103f91"/>
<path d="M474.1 1034.1H497.2A2 2 0 0 1 499.2 1036.1V1041.9H472.1V1036.1A2 2 0 0 1 474.1 1034.1Z" fill="#41a5ee"/>
<rect x="472.1" y="1041.9" width="27.1" height="8.1" fill="#2b7cd3"/>
<rect x="472.1" y="1050" width="27.1" height="7.5" fill="#185abd"/>
<rect x="464" y="1040.9" width="17.9" height="18" rx="1.5" fill="#185abd"/>
<text x="465.7" y="1055.2" font-family="Liberation Sans" font-weight="bold" font-size="14" fill="#fff" textLength="14.3" lengthAdjust="spacingAndGlyphs">W</text>
<!-- SAP -->
<path d="M543 1032C552 1040 566 1040 575.3 1032C567 1042 567 1058 575.3 1068C566 1060 552 1060 543 1068C551 1058 551 1042 543 1032Z" fill="#587c94"/>
<path d="M548 1036C554 1042 564 1042 570.5 1036C564.5 1043 564.5 1057 570.5 1064C564 1058 554 1058 548 1064C553 1057 553 1043 548 1036Z" fill="#8fb0c6" opacity="0.8"/>
<path d="M558 1049.5H566" stroke="#456679" stroke-width="1"/>
<rect x="539.2" y="1040.3" width="19" height="19" rx="1.3" fill="#1a73d9"/>
<text x="542.6" y="1056" font-family="Liberation Sans" font-weight="bold" font-size="17" fill="#fff">S</text>
<!-- paint -->
<defs><linearGradient id="gPal" x1="0" y1="0" x2="1" y2="1"><stop offset="0" stop-color="#e3f0fa"/><stop offset="1" stop-color="#a9cde9"/></linearGradient></defs>
<path d="M616.5 1055.5C612.5 1048 621.5 1038 635 1038C644.5 1038 648.5 1043.5 647 1050.5C645.5 1058.5 636.5 1064 628 1062.5C624.5 1061.8 625.5 1057.5 622 1058.5C619.5 1059.2 617.8 1058 616.5 1055.5Z" fill="url(#gPal)" stroke="#6ea4d2" stroke-width="1.3"/>
<circle cx="629.3" cy="1052.8" r="1.8" fill="#eef6fc" stroke="#7fb0d9" stroke-width="1"/>
<rect x="617.8" y="1048.5" width="5" height="5" rx="1.8" fill="#e3302c"/>
<rect x="623.3" y="1043.5" width="5" height="5" rx="1.8" fill="#44b83f"/>
<rect x="630.5" y="1040" width="5" height="5" rx="1.8" fill="#f7b500"/>
<path d="M631.8 1066.3L643.3 1041.5" stroke="#e5861c" stroke-width="3" stroke-linecap="round"/>
<path d="M642.8 1042L645.2 1037.5" stroke="#9c9c9c" stroke-width="2.4"/>
<path d="M643.5 1038.5L640.8 1035L645.5 1032L651 1034.5L648.8 1039Z" fill="#d4a466"/>
<!-- tray -->
<path d="M1600.9 1053.8L1609.8 1044.7L1618.8 1053.8" fill="none" stroke="#000" stroke-width="1.3"/>
<path d="M1646.6 1041.2C1651 1041 1654 1039.5 1657.5 1038.2C1661 1039.5 1664 1041 1668.4 1041.2V1048.7C1668.4 1055 1663 1059 1657 1061.3C1651.5 1059 1646.6 1055 1646.6 1048.7Z" fill="#fff" stroke="#000" stroke-width="1"/>
<path d="M1657.5 1038.3V1061M1646.6 1048.7H1668.4" stroke="#000" stroke-width="1"/>
<path d="M1657.1 1061.6H1670L1663.5 1049.4Z" fill="#f9b900"/>
<path d="M1663.4 1053.5V1058M1663.4 1059.3V1060.5" stroke="#000" stroke-width="1"/>
<g fill="none" stroke="#111" stroke-width="1.2" stroke-linecap="round" stroke-linejoin="round">
<path d="M1695.3 1040.6C1695.3 1043 1696 1044.6 1696.7 1044.6C1697.4 1044.6 1697.8 1043 1698 1041.3C1698.2 1040 1699.4 1040.2 1699.4 1041.6V1054.5C1699.4 1055.9 1700.9 1056 1701.1 1054.8"/>
<circle cx="1703.9" cy="1049.5" r="0.9"/>
<path d="M1704.7 1050V1056.3L1709.8 1048.4M1710.7 1048.3V1056.4"/>
<circle cx="1715.5" cy="1049.5" r="0.9"/>
<path d="M1715.3 1050.2V1056.3H1720.5M1720.6 1048.3V1056.3M1715.4 1053.2L1717.6 1051.8"/>
</g>
<g font-family="Liberation Sans" font-size="16.5" fill="#000" stroke="#d4dcea" stroke-width="0.2">
<text x="1767.3" y="1042.6" textLength="42" lengthAdjust="spacingAndGlyphs">13:38</text>
<text x="1751.5" y="1070.3" textLength="71.8" lengthAdjust="spacingAndGlyphs">6/1/2023</text>
</g>
<path d="M1858 1037.9H1882V1057.1H1872.5L1869 1061.8L1865.5 1057.1H1858Z" fill="#000"/>
<path d="M1863 1043.5H1877M1863 1047.5H1877M1863 1051.5H1872" stroke="#fff" stroke-width="1.1"/>
<circle cx="1876.2" cy="1055.6" r="5.4" fill="#fff" stroke="#000" stroke-width="1"/>
<circle cx="1874" cy="1053.4" r="4.6" fill="#000"/>
<rect x="1912.3" y="1020" width="1.2" height="60" fill="#a9b2c2"/>
</svg>
</body></html>
